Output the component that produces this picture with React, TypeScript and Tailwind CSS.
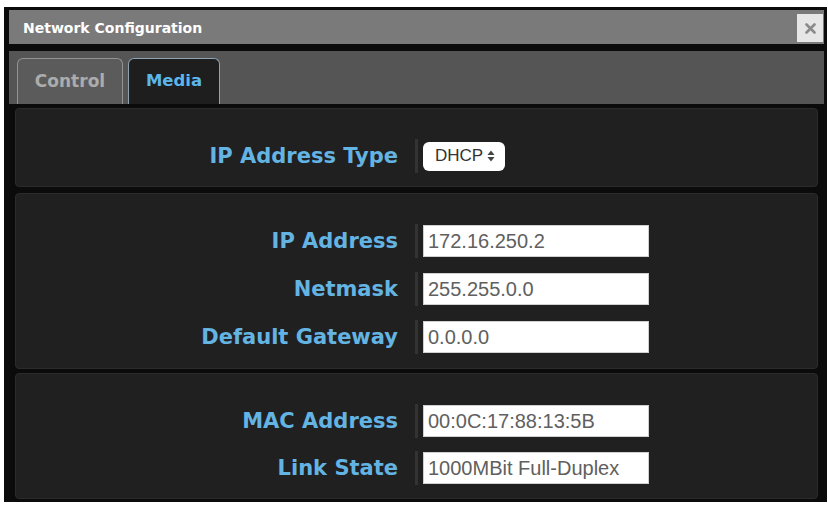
import React from 'react'

type Field = { label: string; value: string }

const addressFields: Field[] = [
  { label: 'IP Address', value: '172.16.250.2' },
  { label: 'Netmask', value: '255.255.0.0' },
  { label: 'Default Gateway', value: '0.0.0.0' },
]

const statusFields: Field[] = [
  { label: 'MAC Address', value: '00:0C:17:88:13:5B' },
  { label: 'Link State', value: '1000MBit Full-Duplex' },
]

function Row({ label, children }: { label: string; children: React.ReactNode }) {
  return (
    <div className="flex h-[32px] items-center">
      <div className="w-[382px] text-right font-['DejaVu_Sans',sans-serif] text-[21px] font-bold leading-none text-[#64b4e3]">
        {label}
      </div>
      <div className="ml-[17px] h-[34px] w-[3px] bg-[#333]" />
      <div className="ml-[5px]">{children}</div>
    </div>
  )
}

function Panel({ children, className }: { children: React.ReactNode; className: string }) {
  return (
    <div className={'mx-[6px] flex flex-col rounded-[4px] border border-[#2b2b2b] bg-[#202020] pt-[31px] ' + className}>
      {children}
    </div>
  )
}

function Input({ value }: { value: string }) {
  return (
    <div className="flex h-[32px] w-[226px] items-center border border-[#d0d0d0] bg-white pl-[4px] font-['Liberation_Sans',sans-serif] text-[20px] text-[#606060]">
      {value}
    </div>
  )
}

export default function App() {
  return (
    <div className="h-[507px] w-[828px] bg-white pl-[4px] pt-[7px]">
      <div className="flex h-[495px] w-[823px] flex-col bg-[#0b0b0b] pl-[5px] pr-[3px] pt-[3px]">
        {/* barra de título */}
        <div className="flex h-[34px] items-start justify-between bg-[#7a7a7a]">
          <span className="ml-[14px] mt-[11px] font-['DejaVu_Sans',sans-serif] text-[14px] font-bold leading-none text-white">
            Network Configuration
          </span>
          <div className="mr-[1px] mt-[4px] flex h-[28px] w-[26px] items-center justify-center bg-[#e6e6e6]">
            <svg width="11" height="11" viewBox="0 0 11 11">
              <path d="M1.5 1.5 L9.5 9.5 M9.5 1.5 L1.5 9.5" stroke="#8a8a8a" strokeWidth="2.6" strokeLinecap="round" />
            </svg>
          </div>
        </div>

        {/* abas */}
        <div className="mt-[7px] flex h-[53px] items-end gap-[5px] bg-[#555] pl-[8px]">
          <div className="flex h-[46px] w-[106px] items-center justify-center rounded-t-[6px] border border-b-0 border-[#939393] bg-[#5b5b5b] font-['DejaVu_Sans',sans-serif] text-[17px] font-bold text-[#acacac]">
            Control
          </div>
          <div className="flex h-[46px] w-[92px] items-center justify-center rounded-t-[6px] border border-b-0 border-[#8ea3b3] bg-[#1e1e1e] font-['DejaVu_Sans',sans-serif] text-[16.5px] font-bold text-[#5bb6ec]">
            Media
          </div>
        </div>

        <div className="mt-[4px] flex flex-col gap-[6px]">
          <Panel className="h-[79px]">
            <Row label="IP Address Type">
              <div className="flex h-[29px] w-[82px] items-center rounded-[6px] bg-white pl-[12px] font-['Liberation_Sans',sans-serif] text-[17px] text-[#333]">
                DHCP
                <svg width="8" height="12" viewBox="0 0 8 12" className="ml-[4px]">
                  <path d="M4 0.5 L7.5 5 L0.5 5 Z" fill="#444" />
                  <path d="M4 11.5 L7.5 7 L0.5 7 Z" fill="#444" />
                </svg>
              </div>
            </Row>
          </Panel>

          <Panel className="h-[176px] gap-[16px]">
            {addressFields.map((f) => (
              <Row key={f.label} label={f.label}>
                <Input value={f.value} />
              </Row>
            ))}
          </Panel>
        </div>

        <div className="mt-[4px]">
          <Panel className="h-[126px] gap-[15px]">
            {statusFields.map((f) => (
              <Row key={f.label} label={f.label}>
                <Input value={f.value} />
              </Row>
            ))}
          </Panel>
        </div>
      </div>
    </div>
  )
}
